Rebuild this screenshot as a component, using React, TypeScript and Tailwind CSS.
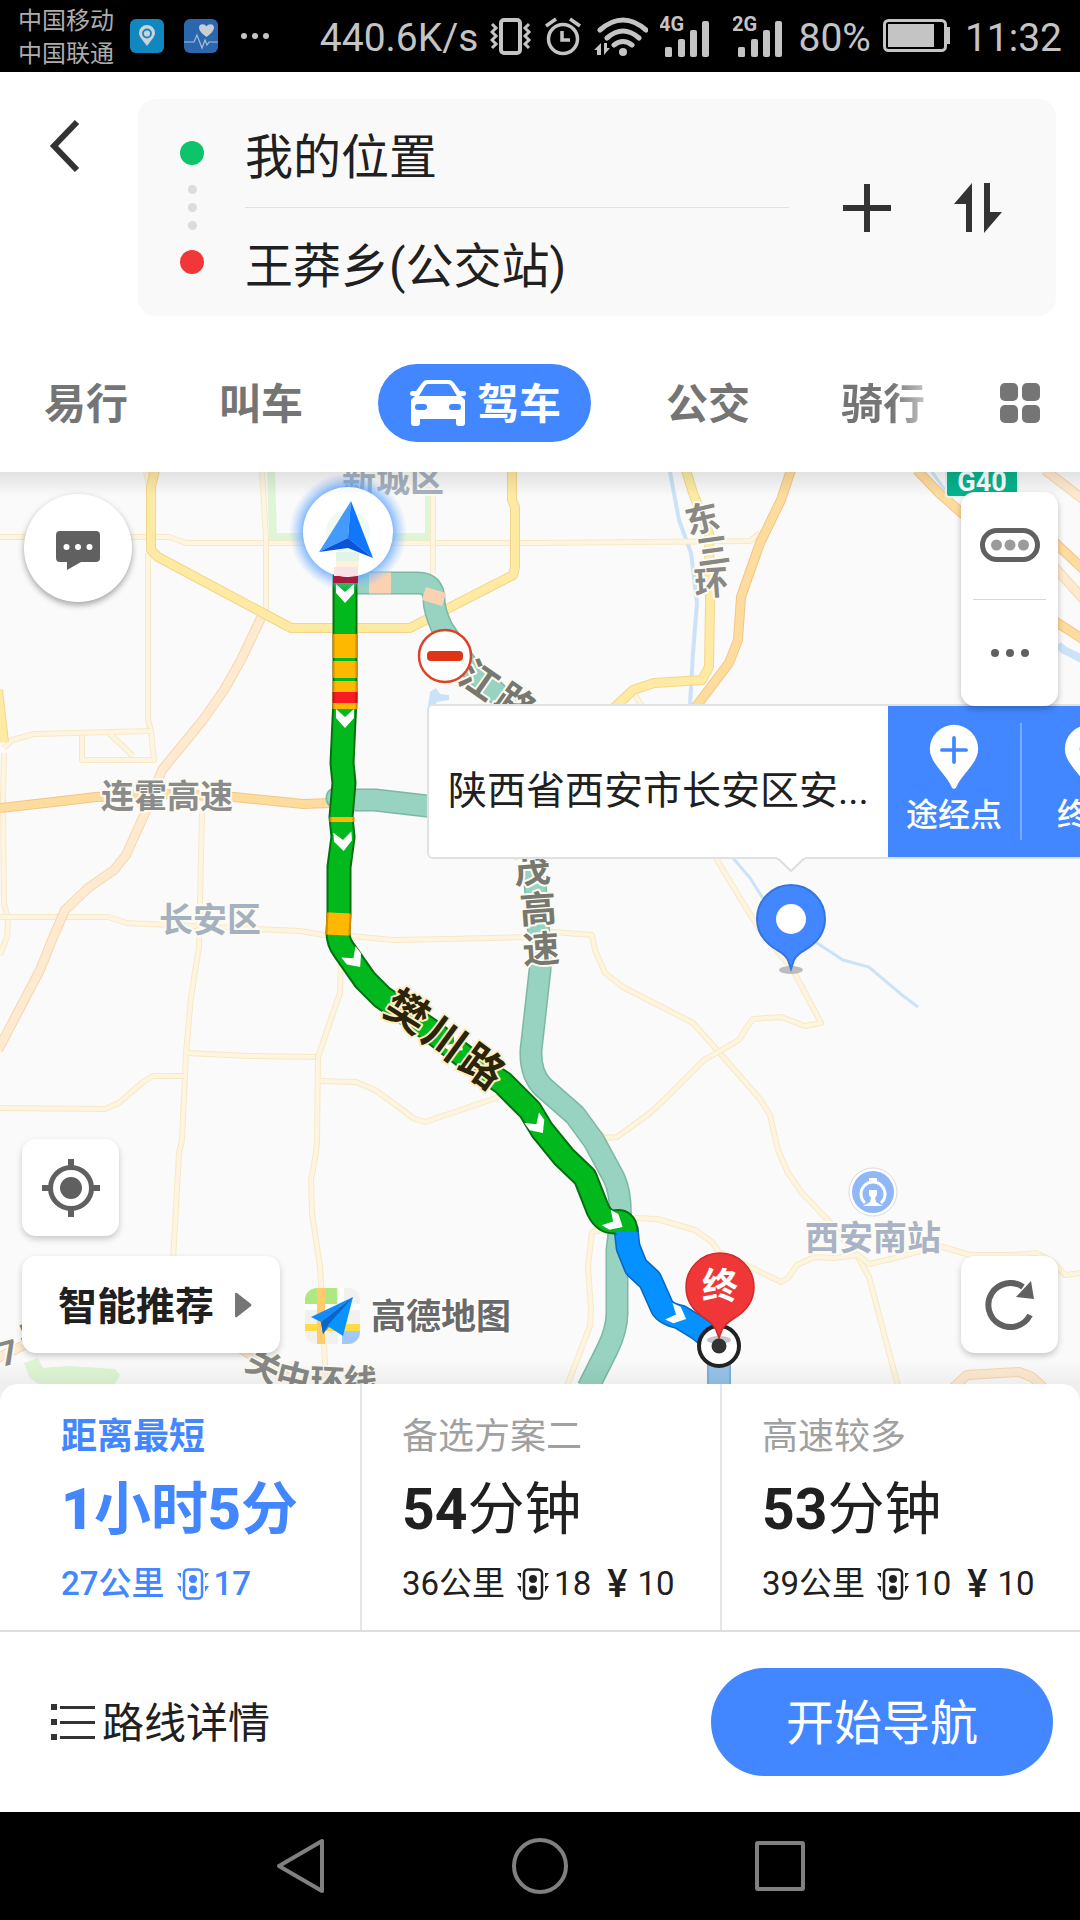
import React from "react";

interface Road {
  kind: "lane" | "main" | "pale" | "highway";
  d: string;
}

interface MapLabel {
  text: string;
  x: number;
  y: number;
  rotate?: number;
  size?: number;
  fill: string;
}

interface RoutePlan {
  title: string;
  time: { value: string; unit: string }[];
  distance: string;
  lights: string;
  toll?: string;
}

const roadStyle = {
  lane: { edge: "#f6e9c6", fill: "#fdf5df", width: 6 },
  pale: { edge: "#f8d6ab", fill: "#feead1", width: 10 },
  main: { edge: "#f5d58c", fill: "#feeaa3", width: 10 },
  highway: { edge: "#f6c487", fill: "#fedc9e", width: 10 },
};

const roads: Road[] = [
  { kind: "lane", d: "M0 537H169L186 543H540L750 541L760 533" },
  { kind: "lane", d: "M262 472L266 537V610" },
  { kind: "lane", d: "M433 487V573" },
  { kind: "lane", d: "M146 472L150 490M148 553V720L151 731L154 760H82V733" },
  { kind: "lane", d: "M4 748L12 740L34 734L151 731M110 734L133 756" },
  { kind: "lane", d: "M4 753L3 800L4 903L8 920L7 937L0 955" },
  { kind: "lane", d: "M0 917H108L127 923L300 931L324 935L351 936L393 940L448 939L527 937L554 932L592 935L595 950L605 973L623 987L693 1023L718 1051L760 1099L770 1115L778 1150L788 1173L802 1193L826 1218L858 1257L869 1277L898 1386" },
  { kind: "lane", d: "M202 813L199 947L191 997L186 1053L182 1140L179 1153L173 1260" },
  { kind: "lane", d: "M188 1053L248 1056L318 1057" },
  { kind: "lane", d: "M0 1108L105 1109L119 1103L143 1082L153 1076H184" },
  { kind: "lane", d: "M341 960L340 993L318 1057L317 1140L316 1153L311 1180L312 1213L320 1267L325 1363V1386" },
  { kind: "lane", d: "M320 1081L356 1082L375 1090L396 1105L413 1118L425 1122L499 1097" },
  { kind: "lane", d: "M714 855L743 903L760 930L793 970L821 1023L805 1026L781 1017L753 1019L747 1027L739 1040L704 1060L664 1100L650 1113L617 1137L605 1138L593 1128" },
  { kind: "lane", d: "M635 1218L657 1219L695 1230L712 1242L719 1252L781 1282L788 1278L797 1265L814 1257L834 1258L858 1255L869 1264L895 1258L939 1246L970 1255L1012 1255L1036 1253L1053 1262L1065 1275L1082 1273" },
  { kind: "lane", d: "M612 1227L592 1232L588 1267L591 1310L590 1326L567 1386" },
  { kind: "lane", d: "M633 692L642 706" },
  { kind: "pale", d: "M261 618L241 660L224 690L203 720L162 770L145 813L126 855L114 870L88 888L65 910L52 940L40 970L-2 1050" },
  { kind: "pale", d: "M953 1388L967 1375L1019 1372L1032 1377L1044 1388" },
  { kind: "pale", d: "M1050 562L1084 600M1045 470L1084 500M-2 1358L30 1342M240 1348L304 1388" },
  { kind: "main", d: "M155 470L151 487V550L158 557L291 628H410L513 575L515 567V507L512 500V470" },
  { kind: "main", d: "M686 470L693 493L709 533L710 603L709 667L702 680L654 683L633 690L614 708" },
  { kind: "main", d: "M-2 690L4 742" },
  { kind: "highway", d: "M0 808L45 803L96 797L165 794L234 797L303 804L331 803" },
  { kind: "highway", d: "M791 470L781 500L760 543L741 597L738 640L729 663L695 708" },
  { kind: "highway", d: "M917 470L939 493L964 515M1050 538L1084 570M1050 618L1084 640" },
];

const labels: MapLabel[] = [
  { text: "新城区", x: 393, y: 480, fill: "#a5b1bf" },
  { text: "连霍高速", x: 167, y: 796, size: 33, fill: "#8b8b8b" },
  { text: "长安区", x: 210, y: 920, fill: "#a5b1bf" },
  { text: "西安南站", x: 873, y: 1238, fill: "#a9b3c5" },
  { text: "东", x: 702, y: 519, rotate: -13, fill: "#888986" },
  { text: "三", x: 713, y: 551, rotate: -8, fill: "#888986" },
  { text: "环", x: 711, y: 583, rotate: -4, fill: "#888986" },
  { text: "江", x: 479, y: 681, rotate: 35, size: 38, fill: "#77786f" },
  { text: "路", x: 515, y: 704, rotate: 35, size: 38, fill: "#77786f" },
  { text: "茂", x: 532, y: 870, rotate: -5, size: 37, fill: "#77786f" },
  { text: "高", x: 538, y: 910, rotate: -4, size: 37, fill: "#77786f" },
  { text: "速", x: 541, y: 950, rotate: -4, size: 37, fill: "#77786f" },
  { text: "关", x: 264, y: 1366, rotate: 28, fill: "#888986" },
  { text: "中", x: 293, y: 1378, rotate: 14, fill: "#888986" },
  { text: "环", x: 327, y: 1382, rotate: 3, fill: "#888986" },
  { text: "线", x: 360, y: 1382, rotate: 3, fill: "#888986" },
  { text: "7", x: 8, y: 1353, rotate: -15, fill: "#888986" },
  { text: "号", x: 36, y: 1335, rotate: -25, fill: "#888986" },
];

// direction arrows along the selected route
const arrows = [
  [345, 593, 0],
  [345, 718, 0],
  [343, 841, -4],
  [354, 959, -38],
  [455, 1044, -52],
  [537, 1125, -36],
  [614, 1222, -60],
  [677, 1315, -66],
];

const greenRoute =
  "M345 570V700L344 720L342 763L344 783L341 817L343 837L339 867V913L338 933Q338 942 344 950L365 980L382 997L430 1030L465 1057L503 1083L530 1110L542 1130L564 1157L585 1177L598 1210Q604 1222 614 1222Q626 1219 626 1232";
const blueRoute = "M626 1228L628 1247L636 1267L650 1280L662 1307Q666 1314 680 1317L698 1328L717 1343";

const plans: RoutePlan[] = [
  {
    title: "距离最短",
    time: [
      { value: "1", unit: "小时" },
      { value: "5", unit: "分" },
    ],
    distance: "27公里",
    lights: "17",
  },
  { title: "备选方案二", time: [{ value: "54", unit: "分钟" }], distance: "36公里", lights: "18", toll: "10" },
  { title: "高速较多", time: [{ value: "53", unit: "分钟" }], distance: "39公里", lights: "10", toll: "10" },
];

const SignalIcon = ({ label }: { label: string }) => (
  <svg width="53" height="46" viewBox="0 0 53 46" fill="#c4c4c4">
    <text x="-1" y="18" fontSize="20" fontWeight="700">
      {label}
    </text>
    <rect x="5" y="34" width="7" height="10" rx="1.5" />
    <rect x="18" y="26" width="7" height="18" rx="2" />
    <rect x="30" y="17" width="7" height="27" rx="2" />
    <rect x="42" y="8" width="7" height="36" rx="2" />
  </svg>
);

const StatusBar = () => (
  <div className="flex h-[72px] items-center justify-between bg-black px-[18px] text-[#c4c4c4]">
    <div className="flex items-center">
      <div className="pt-1 text-[24px] leading-[33px] text-[#adadad]">
        <p>中国移动</p>
        <p>中国联通</p>
      </div>
      <svg className="ml-4" width="34" height="34" viewBox="0 0 34 34">
        <rect width="34" height="34" rx="6" fill="#1187c2" />
        <path d="M17 27C11 19 9 17 9 14a8 8 0 0 1 16 0c0 3-2 5-8 13z" fill="#c9d3d8" />
        <circle cx="17" cy="14.500" r="4" fill="#c9d3d8" stroke="#1187c2" strokeWidth="1.800" />
      </svg>
      <svg className="ml-5" width="34" height="34" viewBox="0 0 34 34">
        <rect width="34" height="34" rx="6" fill="#2b67ae" />
        <path d="M22.500 18C17 14 15 11 15 8.500c0-4 5.500-4.500 7.500-1 2-3.500 7.500-3 7.500 1 0 2.500-2 5.500-7.500 9.500z" fill="#c9ced3" />
        <path d="M0 23H10L13 16L18 29L21 21L23 26L25 23H34" fill="none" stroke="#a9bcd4" strokeWidth="1.200" />
      </svg>
      <svg className="ml-[22px]" width="30" height="8" viewBox="0 0 30 8" fill="#c4c4c4">
        <circle cx="4" cy="4" r="3" />
        <circle cx="15" cy="4" r="3" />
        <circle cx="26" cy="4" r="3" />
      </svg>
    </div>
    <div className="flex items-center gap-3 text-[39px] leading-[46px]">
      <span className="pt-1">440.6K/s</span>
      <svg width="42" height="40" viewBox="0 0 42 40" fill="none" stroke="#c4c4c4">
        <rect x="11" y="4" width="19" height="33" rx="3" strokeWidth="4" />
        <path d="M2 8l4 4-4 4 4 4-4 4 4 4-4 4M39 8l-4 4 4 4-4 4 4 4-4 4 4 4" strokeWidth="3" />
      </svg>
      <svg width="38" height="40" viewBox="0 0 38 40" fill="none" stroke="#c4c4c4" strokeWidth="3.500">
        <circle cx="19" cy="23" r="14.500" />
        <path d="M18 15v9h8" />
        <path d="M2 10l10-7M36 10L26 3" />
      </svg>
      <svg width="54" height="40" viewBox="0 0 54 40" fill="none" stroke="#c4c4c4" strokeWidth="5" strokeLinecap="round">
        <path d="M6 14Q29-6 52 14M13 22Q29 8 45 22M20 29Q29 22 38 29" />
        <circle cx="29" cy="36" r="4" fill="#c4c4c4" stroke="none" />
        <path d="M0 34l7-7v12H3v-5zM16 32l-6 7V27h3v5z" fill="#c4c4c4" stroke="none" />
      </svg>
      <div className="flex gap-5">
        <SignalIcon label="4G" />
        <SignalIcon label="2G" />
      </div>
      <span className="pt-1">80%</span>
      <svg width="70" height="36" viewBox="0 0 70 36">
        <rect x="1.500" y="2.500" width="61" height="30" rx="4" fill="none" stroke="#c4c4c4" strokeWidth="3" />
        <rect x="5" y="6" width="46" height="23" fill="#c4c4c4" />
        <rect x="64" y="9" width="3" height="17" fill="#c4c4c4" />
      </svg>
      <span className="pt-1">11:32</span>
    </div>
  </div>
);

const RouteForm = () => (
  <div className="flex pr-6">
    <button aria-label="返回" className="flex w-[138px] cursor-pointer justify-start pt-5 pl-[48px]">
      <svg width="34" height="54" viewBox="0 0 34 54" fill="none" stroke="#333" strokeWidth="6">
        <path d="M29 3L6 27L29 51" />
      </svg>
    </button>
    <div className="flex h-[217px] flex-1 items-center rounded-[18px] bg-[#f9f9f9] pr-[53px] pl-[42px]">
      <div className="flex w-6 flex-col items-center gap-[9px]">
        <span className="mb-[11px] h-6 w-6 rounded-full bg-[#0dc46c]" />
        <span className="h-[9px] w-[9px] rounded-full bg-[#dcdcdc]" />
        <span className="h-[9px] w-[9px] rounded-full bg-[#dcdcdc]" />
        <span className="h-[9px] w-[9px] rounded-full bg-[#dcdcdc]" />
        <span className="mt-[11px] h-6 w-6 rounded-full bg-[#f13738]" />
      </div>
      <div className="ml-[41px] flex min-w-0 flex-1 flex-col text-[48px] leading-[72px] text-[#202020]">
        <input
          aria-label="起点"
          defaultValue="我的位置"
          className="h-[108px] w-full border-b border-[#e2e2e2] bg-transparent outline-none"
        />
        <input
          aria-label="终点"
          defaultValue="王莽乡(公交站)"
          className="h-[108px] w-full bg-transparent outline-none"
        />
      </div>
      <button aria-label="添加途经点" className="ml-[53px] cursor-pointer">
        <svg width="50" height="50" viewBox="0 0 50 50" fill="none" stroke="#333" strokeWidth="6">
          <path d="M25 1V49M1 25H49" />
        </svg>
      </button>
      <button aria-label="交换起终点" className="ml-[61px] cursor-pointer">
        <svg width="50" height="52" viewBox="0 0 50 52" fill="#333">
          <path d="M19 1V50H13V22H1zM31 1h6V30H49L31 51z" />
        </svg>
      </button>
    </div>
  </div>
);

const TravelTabs = () => (
  <nav className="mt-12 flex items-center justify-between pr-[40px] pl-11 text-[42px] leading-[60px] font-bold text-[#757575]">
    <div className="flex items-center gap-[91px]">
      <button className="cursor-pointer pt-1">易行</button>
      <button className="cursor-pointer pt-1">叫车</button>
      <button className="-mx-4 flex h-[78px] cursor-pointer items-center rounded-full bg-[#4287ff] pr-[30px] pl-8 text-white">
        <svg className="mr-[11px]" width="56" height="48" viewBox="0 0 56 48" fill="#fff">
          <path
            fillRule="evenodd"
            d="M17 1H39Q42 1 44 4L50 12H54Q56 12 56 14.500Q56 17 53 17H51L55 21V44Q55 47 52 47H49Q46 47 46 44V40H10V44Q10 47 7 47H4Q1 47 1 44V21L5 17H3Q0 17 0 14.500Q0 12 2 12H6L12 4Q14 1 17 1zM18 5Q16 5 15 7L9 17H47L41 7Q40 5 38 5zM8 25a3 3 0 0 0 0 6h6a3 3 0 0 0 0-6zM42 25a3 3 0 0 0 0 6h6a3 3 0 0 0 0-6z"
          />
        </svg>
        <span className="pt-1">驾车</span>
      </button>
      <button className="cursor-pointer pt-1">公交</button>
      <button className="cursor-pointer bg-linear-to-r from-[#757575] from-60% to-[#c4c4c4] bg-clip-text pt-1 text-transparent">
        骑行
      </button>
    </div>
    <button aria-label="更多出行方式" className="grid cursor-pointer grid-cols-2 gap-1">
      <span className="h-[18px] w-[18px] rounded-[5px] bg-[#757575]" />
      <span className="h-[18px] w-[18px] rounded-[5px] bg-[#757575]" />
      <span className="h-[18px] w-[18px] rounded-[5px] bg-[#757575]" />
      <span className="h-[18px] w-[18px] rounded-[5px] bg-[#757575]" />
    </button>
  </nav>
);

const MapCanvas = () => (
  <svg className="absolute inset-0 h-full w-full" viewBox="0 472 1080 912" preserveAspectRatio="xMidYMid slice">
    <defs>
      <radialGradient id="glow">
        <stop offset="0.760" stopColor="#5fa4ff" stopOpacity="0.75" />
        <stop offset="1" stopColor="#8fbfff" stopOpacity="0" />
      </radialGradient>
    </defs>
    <rect y="472" width="1080" height="912" fill="#fafafa" />

    {/* parks and water */}
    <path d="M271 472L273 537H429V487" fill="none" stroke="#dff5d8" strokeWidth="8" />
    <path d="M24 1363L38 1358L43 1368L69 1366L115 1369L120 1375L114 1386H41L29 1377z" fill="#dff6d5" />
    <path d="M430 692l6-4 4 6 9 1v5l-12 2-6 10h-4z" fill="#cbe3fa" />
    <g fill="none" stroke="#cbe3f8" strokeWidth="3">
      <path d="M670 472L679 520L691 553L697 603L693 653L690 705" strokeWidth="4" />
      <path d="M733 858L750 878L764 900L817 943L843 960L869 967L902 995L918 1007M932 472L945 490" />
      <path d="M1058 645L1064 650L1084 660" strokeWidth="8" />
    </g>

    <g fill="none" strokeLinejoin="round">
      {roads.map(({ kind, d }) => (
        <g key={d}>
          <path d={d} stroke={roadStyle[kind].edge} strokeWidth={roadStyle[kind].width} />
          <path d={d} stroke={roadStyle[kind].fill} strokeWidth={roadStyle[kind].width - 2} />
        </g>
      ))}
    </g>

    {/* alternative routes */}
    <g fill="none" strokeLinejoin="round">
      {["#7db8a4", "#98d2c0"].map((color, i) => (
        <g key={color} stroke={color} strokeWidth={i ? 20 : 23}>
          <path d="M345 583H418Q434 583 434 600Q434 610 442 628L466 664L502 698L530 740" />
          <path d="M337 798L350 800L375 800L427 806H440" strokeLinecap="round" />
          <path d="M533 855L540 950L540 970L531 1050Q530 1074 543 1087L575 1115L594 1141L614 1178Q622 1195 620 1225L617 1250V1313Q617 1330 607 1350L588 1388" />
        </g>
      ))}
      <path d="M369 583H391M436 590L432 603" stroke="#fad2b2" strokeWidth="21" />
      <path d="M719 1350V1388" stroke="#7fb0de" strokeWidth="24" />
      <path d="M719 1350V1388" stroke="#95c3e8" strokeWidth="20" />
    </g>

    {/* selected route with its traffic */}
    <g fill="none" strokeLinejoin="round">
      <path d={blueRoute} stroke="#0867c2" strokeWidth="25" />
      <path d={blueRoute} stroke="#0591ff" strokeWidth="22" />
      <path d={greenRoute} stroke="#04700f" strokeWidth="25" />
      <path d={greenRoute} stroke="#02b91d" strokeWidth="21" />
      <g stroke="#d98a06" strokeWidth="25">
        <path d="M345 634V658M345 661V678M345 681V709M342 817V822M339 913L338 935" />
      </g>
      <g stroke="#ffb800" strokeWidth="21">
        <path d="M345 634V658M345 661V678M345 681V709M342 817V822M339 913L338 935" />
      </g>
      <path d="M345 692V703" stroke="#c81414" strokeWidth="25" />
      <path d="M345 692V703" stroke="#fa1b22" strokeWidth="21" />
    </g>
    {arrows.map(([x, y, turn]) => (
      <path
        key={y}
        d="M-9-9L0-1L9-9V0L0 10L-9 0z"
        fill="#fff"
        transform={`translate(${x} ${y}) rotate(${turn})`}
      />
    ))}

    {/* place and road names */}
    <g
      fontWeight="700"
      textAnchor="middle"
      dominantBaseline="central"
      stroke="#fcfbf3"
      strokeWidth="4"
      strokeLinejoin="round"
      paintOrder="stroke"
    >
      {labels.map(({ text, x, y, rotate = 0, size = 34, fill }) => (
        <text key={text + y} fontSize={size} fill={fill} transform={`translate(${x} ${y}) rotate(${rotate})`}>
          {text}
        </text>
      ))}
      <g fontSize="42" fill="#2c2409" stroke="#fbeec5">
        <text transform="translate(407 1012) rotate(32)">樊</text>
        <text transform="translate(445 1039) rotate(36)">川</text>
        <text transform="translate(482 1067) rotate(36)">路</text>
      </g>
    </g>

    <rect x="945" y="450" width="74" height="48" rx="4" fill="#e4f5ee" />
    <rect x="947" y="450" width="70" height="46" rx="2" fill="#04b48c" />
    <text x="982" y="491" fontSize="27" fontWeight="700" textAnchor="middle" fill="#fff">
      G40
    </text>

    {/* no entry */}
    <circle cx="445" cy="656" r="26" fill="#fff" stroke="#da4327" strokeWidth="2.500" />
    <rect x="427" y="651" width="36" height="10" rx="4" fill="#e03416" />

    {/* own position */}
    <circle cx="348" cy="532" r="59" fill="url(#glow)" />
    <path d="M333 570h25v13h-25z" fill="#a8193f" />
    <circle cx="348" cy="532" r="45" fill="#fff" />
    <circle cx="348" cy="532" r="22" fill="#f0faf3" />
    <path d="M336 552h23v9h-23z" fill="#e2f4e8" />
    <path d="M336 561h23v6h-23z" fill="#fdf3dc" />
    <path d="M334 567h24v9h-24z" fill="#f8e2e8" />
    <path d="M351 501L319 552L348 538z" fill="#439bfb" />
    <path d="M351 501L373 558L348 538z" fill="#1076fb" />
    <path d="M319 552L348 538L373 558L348 548z" fill="#0a54da" />

    {/* railway station */}
    <circle cx="873" cy="1192" r="24" fill="#fff" stroke="#d9dbe0" />
    <circle cx="873" cy="1192" r="21" fill="#91b8f6" />
    <path d="M865 1203a12 12 0 1 1 16 0" fill="none" stroke="#fff" strokeWidth="3" />
    <path d="M869 1178h8v5h-8zM869 1190h8v5l-2 3 1 4 7 4h-20l7-4 1-4-2-3z" fill="#fff" />

    {/* dropped pin */}
    <ellipse cx="791" cy="970" rx="12" ry="4" fill="#bcbcbc" />
    <path
      d="M791 969L788 960Q785 954 777 950Q757 938 757 919a34 34 0 0 1 68 0Q825 938 805 950Q797 954 794 960z"
      fill="#4287ff"
      stroke="#3576dd"
      strokeWidth="2"
    />
    <circle cx="791" cy="919" r="15" fill="#fff" />

    {/* destination */}
    <circle cx="719" cy="1346" r="20" fill="#fff" stroke="#222" strokeWidth="4" />
    <ellipse cx="719" cy="1340" rx="12" ry="4" fill="#c6c6c6" />
    <path
      d="M719 1338L716 1330Q713 1324 706 1319Q686 1307 686 1287a34 34 0 0 1 68 0Q754 1307 733 1319Q725 1324 722 1330z"
      fill="#ef3738"
      stroke="#cf2a2c"
      strokeWidth="1.500"
    />
    <circle cx="719" cy="1346" r="7.500" fill="#333" />
    <text x="720" y="1287" fontSize="36" fontWeight="700" textAnchor="middle" dominantBaseline="central" fill="#fff">
      终
    </text>

    {/* map brand */}
    <clipPath id="brand">
      <rect x="305" y="1288" width="55" height="56" rx="12" />
    </clipPath>
    <g clipPath="url(#brand)">
      <path d="M305 1288h55v56h-55z" fill="#f2f1ee" />
      <path d="M305 1288h32v16h-32z" fill="#aee880" />
      <path d="M305 1304h55v6h-55zM338 1288h6v56h-6z" fill="#fff" />
      <path d="M342 1331h18v13h-18z" fill="#a2c8fb" />
      <path d="M305 1324h55v7h-55z" fill="#ffdc45" />
      <path d="M317 1288h8v56h-8z" fill="#ffcb6b" />
    </g>
    <path d="M353 1297L311 1317L321 1322z" fill="#0f8bfa" />
    <path d="M353 1297L321 1322L323 1334L329 1327L343 1336z" fill="#0a93ff" />
    <path d="M353 1297L321 1322L323 1334L328 1325z" fill="#0c63c9" />
    <text x="371" y="1329" fontSize="35" fontWeight="700" fill="#6a6a6a" stroke="#fff" strokeWidth="3" paintOrder="stroke">
      高德地图
    </text>
  </svg>
);

const MarkerPopup = () => (
  <div className="absolute top-[232px] left-[427px] flex h-[155px] rounded-md border-2 border-[#e0e2e2] bg-white">
    <p className="w-[459px] pt-14 pl-[19px] text-[39px] leading-[58px] whitespace-nowrap text-[#202020]">
      陕西省西安市长安区安...
    </p>
    <div className="flex bg-[#4287ff] py-[17px] text-[32px] leading-[50px] font-medium text-white">
      <button className="flex w-[134px] cursor-pointer flex-col items-center border-r-2 border-[#79abff]">
        <svg width="54" height="72" viewBox="0 0 54 72">
          <path d="M27 71Q25 71 24 68C18 54 1 43 1 28a26 26 0 0 1 52 0C53 43 36 54 30 68Q29 71 27 71z" fill="#fff" />
          <path d="M27 16V42M14 29H40" stroke="#4287ff" strokeWidth="4" strokeLinecap="round" />
        </svg>
        途经点
      </button>
      <button className="flex w-[134px] cursor-pointer flex-col items-center">
        <svg width="54" height="72" viewBox="0 0 54 72">
          <path d="M27 71Q25 71 24 68C18 54 1 43 1 28a26 26 0 0 1 52 0C53 43 36 54 30 68Q29 71 27 71z" fill="#fff" />
          <circle cx="27" cy="28" r="10" fill="#4287ff" />
        </svg>
        终点
      </button>
    </div>
    <svg className="absolute top-[151px] left-[348px]" width="28" height="16" viewBox="0 0 28 16">
      <path d="M0 1.500L2 2.500L14 14L26 2.500L28 1.500V0H0z" fill="#fff" />
      <path d="M0 2L2 2.500L14 14L26 2.500L28 2" fill="none" stroke="#dcdfdf" strokeWidth="2" />
    </svg>
  </div>
);

const MapView = () => (
  <main className="relative min-h-[912px] flex-1 overflow-hidden">
    <MapCanvas />
    <div className="absolute inset-x-0 top-0 h-6 bg-linear-to-b from-black/10 to-transparent" />
    <div className="absolute inset-x-0 bottom-0 h-6 bg-linear-to-t from-black/5 to-transparent" />
    <MarkerPopup />

    <button
      aria-label="反馈"
      className="absolute top-[22px] left-6 flex h-[108px] w-[108px] cursor-pointer items-center justify-center rounded-full bg-white pt-1 shadow-[0_3px_6px_rgba(0,0,0,0.35)]"
    >
      <svg width="44" height="40" viewBox="0 0 44 40">
        <path d="M4 1H40Q44 1 44 5V28Q44 32 40 32H25L11 40V32H4Q0 32 0 28V5Q0 1 4 1z" fill="#606060" />
        <g fill="#fff">
          <circle cx="10.500" cy="17" r="3" />
          <circle cx="22" cy="17" r="3" />
          <circle cx="33.500" cy="17" r="3" />
        </g>
      </svg>
    </button>

    <div className="absolute top-5 right-[22px] flex h-[214px] w-[97px] flex-col rounded-[14px] bg-white px-3 shadow-[0_3px_6px_rgba(0,0,0,0.25)]">
      <button aria-label="路况" className="flex flex-1 cursor-pointer items-center justify-center border-b border-[#d8d8d8]">
        <svg width="60" height="34" viewBox="0 0 60 34">
          <rect x="2.500" y="2.500" width="55" height="29" rx="14.500" fill="none" stroke="#606060" strokeWidth="5" />
          <g fill="#9b9b9b">
            <circle cx="16.500" cy="17" r="5.500" />
            <circle cx="30" cy="17" r="5.500" />
            <circle cx="43.500" cy="17" r="5.500" />
          </g>
        </svg>
      </button>
      <button aria-label="更多" className="flex flex-1 cursor-pointer items-center justify-center">
        <svg width="40" height="10" viewBox="0 0 40 10" fill="#606060">
          <circle cx="5" cy="5" r="4" />
          <circle cx="20" cy="5" r="4" />
          <circle cx="35" cy="5" r="4" />
        </svg>
      </button>
    </div>

    <div className="absolute bottom-[31px] left-[22px] flex flex-col gap-5">
      <button
        aria-label="定位"
        className="flex h-[97px] w-[97px] cursor-pointer items-center justify-center rounded-[14px] bg-white shadow-[0_3px_6px_rgba(0,0,0,0.2)]"
      >
        <svg width="58" height="58" viewBox="0 0 58 58" fill="none" stroke="#606060">
          <circle cx="29" cy="29" r="20.500" strokeWidth="5" />
          <circle cx="29" cy="29" r="11" fill="#606060" stroke="none" />
          <path d="M29 0V8M29 50V58M0 29H8M50 29H58" strokeWidth="6" />
        </svg>
      </button>
      <button className="flex h-[97px] w-[258px] cursor-pointer items-center gap-5 rounded-[14px] bg-white pl-9 text-[39px] leading-[58px] font-bold text-[#202020] shadow-[0_3px_6px_rgba(0,0,0,0.2)]">
        <span className="pt-1">智能推荐</span>
        <svg width="18" height="26" viewBox="0 0 18 26" fill="#757575">
          <path d="M1 2Q1 0 3 1L17 12Q18 13 17 14L3 25Q1 26 1 24z" />
        </svg>
      </button>
    </div>

    <button
      aria-label="刷新"
      className="absolute right-[22px] bottom-[31px] flex h-[97px] w-[97px] cursor-pointer items-center justify-center rounded-[14px] bg-white shadow-[0_3px_6px_rgba(0,0,0,0.2)]"
    >
      <svg width="50" height="50" viewBox="0 0 50 50">
        <path d="M45 35A22 22 0 1 1 38 7" fill="none" stroke="#606060" strokeWidth="6" />
        <path d="M46 1L49 19L31 17z" fill="#606060" />
      </svg>
    </button>
  </main>
);

const TrafficLightIcon = () => (
  <svg width="32" height="32" viewBox="0 0 32 32" fill="currentColor">
    <rect x="7" y="1.500" width="18" height="29" rx="4" fill="none" stroke="currentColor" strokeWidth="2.500" />
    <circle cx="16" cy="11" r="4" />
    <circle cx="16" cy="21.500" r="4" />
    <path d="M0 5h4v5zM0 18h4v6zM32 5h-4v5zM32 18h-4v6z" />
  </svg>
);

const PlanCard: React.FC<{ plan: RoutePlan; active: boolean }> = ({ plan, active }) => (
  <button
    className={`flex cursor-pointer flex-col items-start whitespace-nowrap ${
      active ? "pl-[61px] text-[#4287ff]" : "border-l-2 border-[#e6e6e6] pl-10 text-[#202020]"
    }`}
  >
    <span className={`mt-[26px] text-[36px] leading-[54px] ${active ? "font-bold" : "text-[#a0a0a0]"}`}>
      {plan.title}
    </span>
    <span className={`mt-1 text-[57px] leading-[84px] ${active ? "font-bold" : ""}`}>
      {plan.time.map(({ value, unit }) => (
        <React.Fragment key={unit}>
          <b>{value}</b>
          {unit}
        </React.Fragment>
      ))}
    </span>
    <span className={`mt-2 flex items-center text-[33px] leading-[48px] ${active ? "font-medium" : ""}`}>
      <span className="mr-3">{plan.distance}</span>
      <TrafficLightIcon />
      <span className="ml-[5px]">{plan.lights}</span>
      {plan.toll && (
        <>
          <span className="mr-2.5 ml-4 text-[38px] font-medium">¥</span>
          <span>{plan.toll}</span>
        </>
      )}
    </span>
  </button>
);

const App: React.FC = () => (
  <div className="flex min-h-screen flex-col bg-[#efefef] font-['Roboto','Noto_Sans_CJK_SC',sans-serif]">
    <StatusBar />
    <header className="bg-white pt-[27px] pb-[30px]">
      <RouteForm />
      <TravelTabs />
    </header>
    <MapView />

    {/* Route plans */}
    <section className="grid h-[248px] grid-cols-3 rounded-t-[18px] border-b-2 border-[#dedede] bg-white">
      {plans.map((plan, i) => (
        <PlanCard key={plan.title} plan={plan} active={i === 0} />
      ))}
    </section>
    <footer className="flex h-[180px] items-center justify-between bg-white pr-[27px] pl-[50px]">
      <button className="flex cursor-pointer items-center gap-1.5 text-[42px] leading-[60px] text-[#202020]">
        <svg width="46" height="36" viewBox="0 0 46 36" fill="#333">
          <path d="M1 0h6v6H1zM1 15h6v6H1zM1 30h6v6H1zM10 2h35v3H10zM10 17h35v3H10zM10 32h35v3H10z" />
        </svg>
        <span className="pt-1">路线详情</span>
      </button>
      <button className="h-[108px] w-[342px] cursor-pointer rounded-full bg-[#4287ff] pt-1 text-[48px] leading-[72px] text-white">
        开始导航
      </button>
    </footer>

    {/* System keys */}
    <div className="flex h-[108px] items-center justify-center gap-[180px] bg-black">
      <button aria-label="系统返回" className="cursor-pointer">
        <svg width="60" height="60" viewBox="0 0 60 60" fill="none" stroke="#808080" strokeWidth="4" strokeLinejoin="round">
          <path d="M52 5V55L9 30z" />
        </svg>
      </button>
      <button aria-label="主屏幕" className="cursor-pointer">
        <svg width="60" height="60" viewBox="0 0 60 60" fill="none" stroke="#808080" strokeWidth="4">
          <circle cx="30" cy="30" r="26" />
        </svg>
      </button>
      <button aria-label="最近任务" className="cursor-pointer">
        <svg width="60" height="60" viewBox="0 0 60 60" fill="none" stroke="#808080" strokeWidth="4">
          <rect x="7" y="7" width="46" height="46" rx="1" />
        </svg>
      </button>
    </div>
  </div>
);

export default App;
